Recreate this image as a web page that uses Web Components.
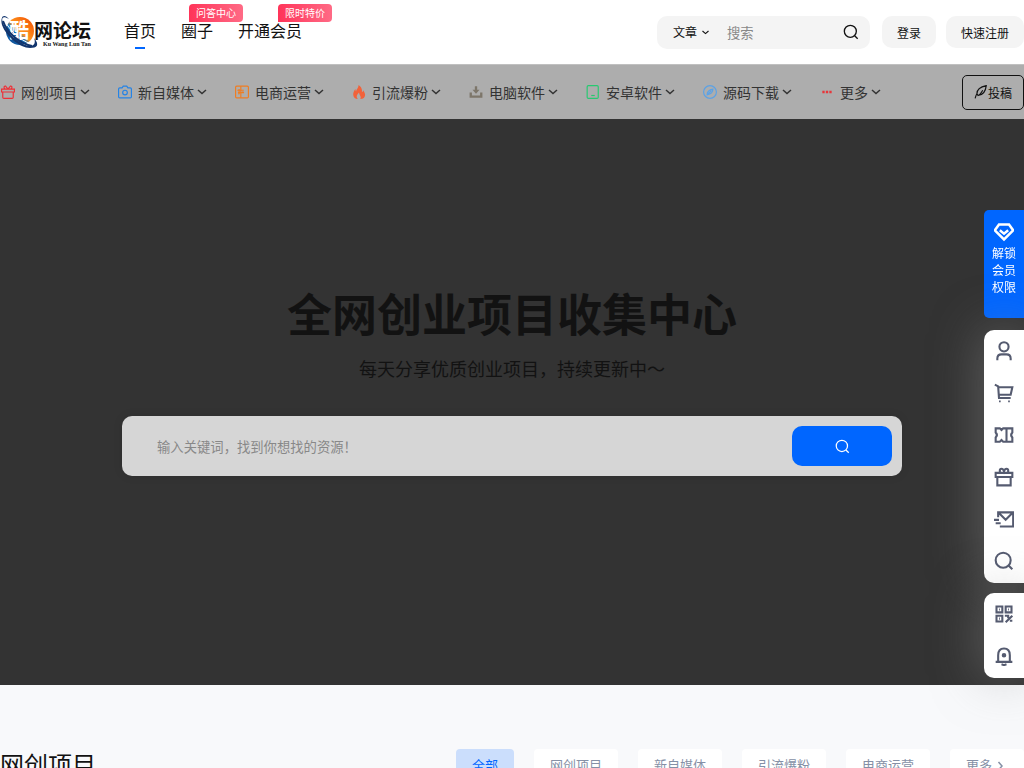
<!DOCTYPE html>
<html lang="zh-CN">
<head>
<meta charset="utf-8">
<meta name="viewport" content="width=device-width, initial-scale=1">
<title>酷网论坛</title>
<style>
body{margin:0;background:#f8f9fb;color:#121212;font:14px/20px "Liberation Sans","Noto Sans CJK SC",sans-serif;overflow-x:hidden}
</style>
</head>
<body>
<site-header></site-header>
<channel-bar>
  <channel-item icon="gift" tint="#ee2f36">网创项目</channel-item>
  <channel-item icon="camera" tint="#2483e6">新自媒体</channel-item>
  <channel-item icon="book" tint="#ef7d22">电商运营</channel-item>
  <channel-item icon="fire" tint="#f2623a">引流爆粉</channel-item>
  <channel-item icon="download" tint="#7d766a">电脑软件</channel-item>
  <channel-item icon="tablet" tint="#27c971">安卓软件</channel-item>
  <channel-item icon="compass" tint="#5ba2e6">源码下载</channel-item>
  <channel-item icon="dots" tint="#e8363b">更多</channel-item>
</channel-bar>
<hero-search>
  <span slot="title">全网创业项目收集中心</span>
  <span slot="subtitle">每天分享优质创业项目，持续更新中～</span>
</hero-search>
<project-section>网创项目</project-section>
<side-tools></side-tools>
<script>
const ICONS={
  chevron:'<path d="M4 8l8 7 8-7"/>',
  right:'<path d="M9 4l7 8-7 8"/>',
  search:'<circle cx="11" cy="11" r="9"/><path d="M17.500 17.500L22 22"/>',
  gift:'<path d="M1 7h22v5H1zM3 12v9q0 2 2 2h14q2 0 2-2v-9M12 7L8 2C5 1 4 5 7 7M12 7l4-5c3-1 4 3 1 5"/>',
  camera:'<path d="M3 5h4l2-3h6l2 3h4q2 0 2 2v13q0 2-2 2H3q-2 0-2-2V7q0-2 2-2z"/><circle cx="12" cy="13" r="4"/>',
  book:'<rect x="1" y="2" width="22" height="20" rx="2"/><path d="M10 2v20M4 9h11M5 13h9M7 7v9M6 16l2-3M13 11l2 3"/>',
  fire:'<path fill="currentColor" stroke="none" d="M11 0c1 5-4 7-4 11-1-1-1-3-1-4-7 8-4 17 4 17-4-4-1-8 2-11 0 4 5 7 2 11 9 0 11-8 5-15 0 2-1 3-2 3 1-5-2-10-6-12z"/>',
  download:'<path fill="currentColor" stroke="none" d="M10 2h4v6h4l-6 7-6-7h4zM1 13h4v5h14v-5h4v9H1z"/>',
  tablet:'<rect x="2" y="1" width="19" height="22" rx="2"/><path d="M9 18h6"/>',
  compass:'<circle cx="12" cy="12" r="11"/><path d="M7 17c0-6 4-9 10-10 0 6-4 9-10 10zM7 17l7-7"/>',
  dots:'<path fill="currentColor" stroke="none" d="M4 10h4v4H4zM10 10h4v4h-4zM16 10h4v4h-4z"/>',
  feather:'<path d="M2 23c1-3 1-5 3-8C5 8 11 3 21 1c-1 9-4 16-14 17M5 15l2 3c3-1 5-4 8-9"/>',
  diamond:'<path d="M6 3h12l5 7-11 11L1 10z"/><path d="M7 10l5 4 5-4"/>',
  user:'<circle cx="12" cy="7" r="5.500"/><path d="M4 23v-2q0-5 5-5h6q5 0 5 5v2"/>',
  cart:'<path d="M1 2l4 2 1 14h14M5 5h17l-2 9H6"/><path d="M6 21h2v2H6zM17 21h2v2h-2z" fill="currentColor" stroke="none"/>',
  ticket:'<path d="M2 4h5l2 2 2-2h11v5q-3 3 0 6v5H11l-2-2-2 2H2v-5q3-3 0-6zM15 4v16"/>',
  gift2:'<path d="M2 7h20v5H2zM4 12v10h16V12M7 7V4q0-2 2-2t3 3q1-3 3-3t2 2v3M12 4v3"/>',
  mail:'<path d="M5 10V4h18v17H7M5 4l9 9 9-9M0 13h6M2 17h6"/>',
  qr:'<path d="M3 3h7v7H3zM14 3h7v7h-7zM3 14h7v7H3zM6 6.500h1M17 6.500h1M6 17.500h1M13 14h4v3M22 14l-8 8M19 20h3"/>',
  bell:'<path d="M5 19v-8q0-8 7-8t7 8v8M2 19h20M9 22l3 1 3-1"/><circle cx="12" cy="11" r="1.500" fill="currentColor"/>'
};
class UiIcon extends HTMLElement{
  connectedCallback(){
    if(this.shadowRoot)return;
    this.attachShadow({mode:'open'}).innerHTML=`<style>:host{display:block;width:16px;height:16px;flex:none}svg{display:block;width:100%;height:100%;fill:none;stroke:currentColor;stroke-width:var(--stroke,2)}</style><svg viewBox="0 0 24 24" aria-hidden="true">${ICONS[this.getAttribute('name')]}</svg>`;
  }
}
customElements.define('ui-icon',UiIcon);
const define=(name,html,setup)=>customElements.define(name,class extends HTMLElement{
  connectedCallback(){
    if(this.shadowRoot)return;
    const t=document.createElement('template');
    t.innerHTML='<style>*{box-sizing:border-box}a{color:inherit;text-decoration:none}button,input,select{font-family:inherit;border:0;margin:0;padding:0;background:none;color:inherit;outline:0}button{cursor:pointer}</style>'+html;
    this.attachShadow({mode:'open'}).append(t.content.cloneNode(true));
    if(setup)setup(this,this.shadowRoot);
  }
});
define('site-logo',`<style>:host{display:block;width:94px;height:40px}svg{display:block}</style>
<a href="#" aria-label="酷网论坛"><svg width="94" height="40" viewBox="0 0 94 40">
<defs><linearGradient id="g" x1="1" y1="0" x2="0" y2="1"><stop stop-color="#f04800"/><stop offset=".5" stop-color="#ff961e"/><stop offset=".6" stop-color="#1a76bd"/><stop offset="1" stop-color="#073d83"/></linearGradient></defs>
<circle cx="20" cy="19" r="14" fill="url(#g)"/>
<text x="9" y="26" font-family="Noto Sans CJK SC" font-size="20" font-weight="700" fill="#fff">酷</text>
<path d="M9 7C2 3 0 6 5 15c5 9 17 19 25 19 4 0 6-3 4-8 6 7 3 10-4 10C20 36 6 24 2 13 0 4 4 1 9 7z" fill="#12356d"/>
<path d="M5 9c5 10 15 19 26 23" fill="none" stroke="#fff"/>
<path d="M3 9c4 11 15 22 29 25" fill="none" stroke="#12356d" stroke-width="2"/>
<text x="34" y="26" font-family="Noto Sans CJK SC" font-size="19" font-weight="700" fill="#111">网论坛</text>
<text x="43" y="34" font-family="Liberation Serif" font-size="6" font-weight="700" fill="#111">Ku Wang Lun Tan</text></svg></a>`);
define('nav-link',`<style>:host{display:block;position:relative;font-size:16px;line-height:66px;white-space:nowrap}
a{display:block}b{position:absolute;top:5px;right:-30px;padding:0 7px;border-radius:4px 4px 4px 0;font:10px/18px "Noto Sans CJK SC",sans-serif;color:#fff;background:linear-gradient(90deg,#ff3459,#ff6a85)}
:host([active])::after{content:"";position:absolute;left:50%;top:48px;width:10px;height:2px;margin-left:-5px;background:#06f}</style>
<a href="#"><slot></slot></a>`,(el,r)=>{if(el.getAttribute('badge')){const b=document.createElement('b');b.textContent=el.getAttribute('badge');r.append(b)}});
define('site-header',`<style>:host{display:block;background:#fff}header,nav,form{display:flex;align-items:center}header{height:64px}nav{gap:25px;margin-left:30px;margin-right:auto}
form{width:213px;height:33px;border-radius:10px;background:#f4f4f4;padding:0 11px 0 16px;margin-right:12px}
.type{position:relative;display:flex;align-items:center;width:54px}select{appearance:none;width:38px;padding-top:1px;font-size:12px}.type ui-icon{position:absolute;left:28px;width:9px;height:9px;pointer-events:none;--stroke:3}
input{flex:1;min-width:0;padding-top:2px}input::placeholder{color:#888}
.auth{height:32px;padding:0 15px;border-radius:10px;background:#f4f4f4;font-size:12px}.auth+.auth{margin-left:10px}</style>
<header><site-logo></site-logo><nav><nav-link active>首页</nav-link><nav-link badge="问答中心">圈子</nav-link><nav-link badge="限时特价">开通会员</nav-link></nav>
<form role="search"><label class="type"><select aria-label="搜索类型"><option>文章</option></select><ui-icon name="chevron"></ui-icon></label><input type="text" placeholder="搜索" aria-label="搜索"><button type="button" aria-label="搜索"><ui-icon name="search"></ui-icon></button></form>
<button class="auth">登录</button><button class="auth">快速注册</button></header>`);
define('channel-item',`<style>:host{display:block}a{display:flex;align-items:center;line-height:20px;white-space:nowrap;color:#333}.t{padding-top:2px}.i{width:14px;height:14px;margin:0 6px 0 1px}.c{width:12px;height:12px;margin-left:2px}</style>
<a href="#"><ui-icon class="i"></ui-icon><span class="t"><slot></slot></span><ui-icon class="c" name="chevron" style="--stroke:3"></ui-icon></a>`,(el,r)=>{
  const old=r.querySelector('.i'),n=document.createElement('ui-icon');n.className='i';n.setAttribute('name',el.getAttribute('icon'));n.style.color=el.getAttribute('tint');old.replaceWith(n)});
define('channel-bar',`<style>:host{display:flex;align-items:center;height:55px;background:#adadad;border-top:1px solid #c0c0c0;box-sizing:border-box}nav{display:flex;gap:26px;margin-right:auto}
button{display:flex;align-items:center;justify-content:center;width:62px;height:35px;border:1px solid #111;border-radius:5px;font-size:12px}button ui-icon{width:14px;height:14px}</style>
<nav><slot></slot></nav><button><ui-icon name="feather"></ui-icon>投稿</button>`);
define('hero-search',`<style>:host{display:block;background:#333;padding:168px 0 209px;text-align:center}h1{margin:0;font-size:45px;line-height:60px}p{margin:8px 0 31px;font-size:18px;line-height:30px}
form{display:flex;align-items:center;width:780px;max-width:calc(100% - 40px);height:60px;margin:0 auto;padding:10px;border-radius:10px;background:#d6d6d6;box-shadow:0 0 10px rgba(0,0,0,.1)}
input{flex:1;min-width:0;padding:2px 25px 0}input::placeholder{color:#888}button{display:flex;align-items:center;justify-content:center;width:100px;height:40px;border-radius:10px;background:#06f;color:#fff}button ui-icon{width:15px;height:15px}</style>
<h1><slot name="title"></slot></h1><p><slot name="subtitle"></slot></p>
<form role="search"><input type="text" placeholder="输入关键词，找到你想找的资源！" aria-label="输入关键词"><button type="button" aria-label="搜索"><ui-icon name="search"></ui-icon></button></form>`);
define('project-section',`<style>:host{display:flex;justify-content:space-between;padding:64px 0 30px}h2{margin:0;font-size:24px;line-height:34px;font-weight:400}nav{display:flex;gap:20px}
a{display:flex;align-items:center;height:32px;padding:2px 16px 0;border-radius:4px;background:#fff;color:#8590a6;font-size:13px;white-space:nowrap}a.on{background:#cbdefc;color:#06f}a ui-icon{width:12px;height:12px;margin:0 2px 0 2px;--stroke:3}</style>
<h2><slot></slot></h2><nav aria-label="分类"><a class="on" href="#">全部</a><a href="#">网创项目</a><a href="#">新自媒体</a><a href="#">引流爆粉</a><a href="#">电商运营</a><a href="#">更多<ui-icon name="right"></ui-icon></a></nav>`);
define('side-tools',`<style>:host{position:fixed;right:0;top:210px;width:40px}.vip{display:flex;flex-direction:column;align-items:center;height:108px;padding:12px 8px;border-radius:5px 0 0 5px;background:#06f;color:#fff;font-size:12px;line-height:17px;margin-bottom:12px}.vip ui-icon{width:20px;height:20px;margin-bottom:4px;--stroke:3}
.panel{background:#fff;border-radius:10px 0 0 10px;box-shadow:0 0 50px rgba(150,150,150,.5);margin-bottom:10px;padding-bottom:1px;color:#555b70}.panel button{display:flex;width:40px;height:42px;align-items:center;justify-content:center}.panel ui-icon{width:20px;height:20px;--stroke:2.500}</style>
<a class="vip" href="#"><ui-icon name="diamond"></ui-icon>解锁会员权限</a>
<div class="panel"><button aria-label="用户"><ui-icon name="user"></ui-icon></button><button aria-label="购物车"><ui-icon name="cart"></ui-icon></button><button aria-label="优惠券"><ui-icon name="ticket"></ui-icon></button><button aria-label="礼物"><ui-icon name="gift2"></ui-icon></button><button aria-label="消息"><ui-icon name="mail"></ui-icon></button><button aria-label="搜索"><ui-icon name="search"></ui-icon></button></div>
<div class="panel"><button aria-label="二维码"><ui-icon name="qr"></ui-icon></button><button aria-label="通知"><ui-icon name="bell"></ui-icon></button></div>`);
</script>
</body>
</html>
